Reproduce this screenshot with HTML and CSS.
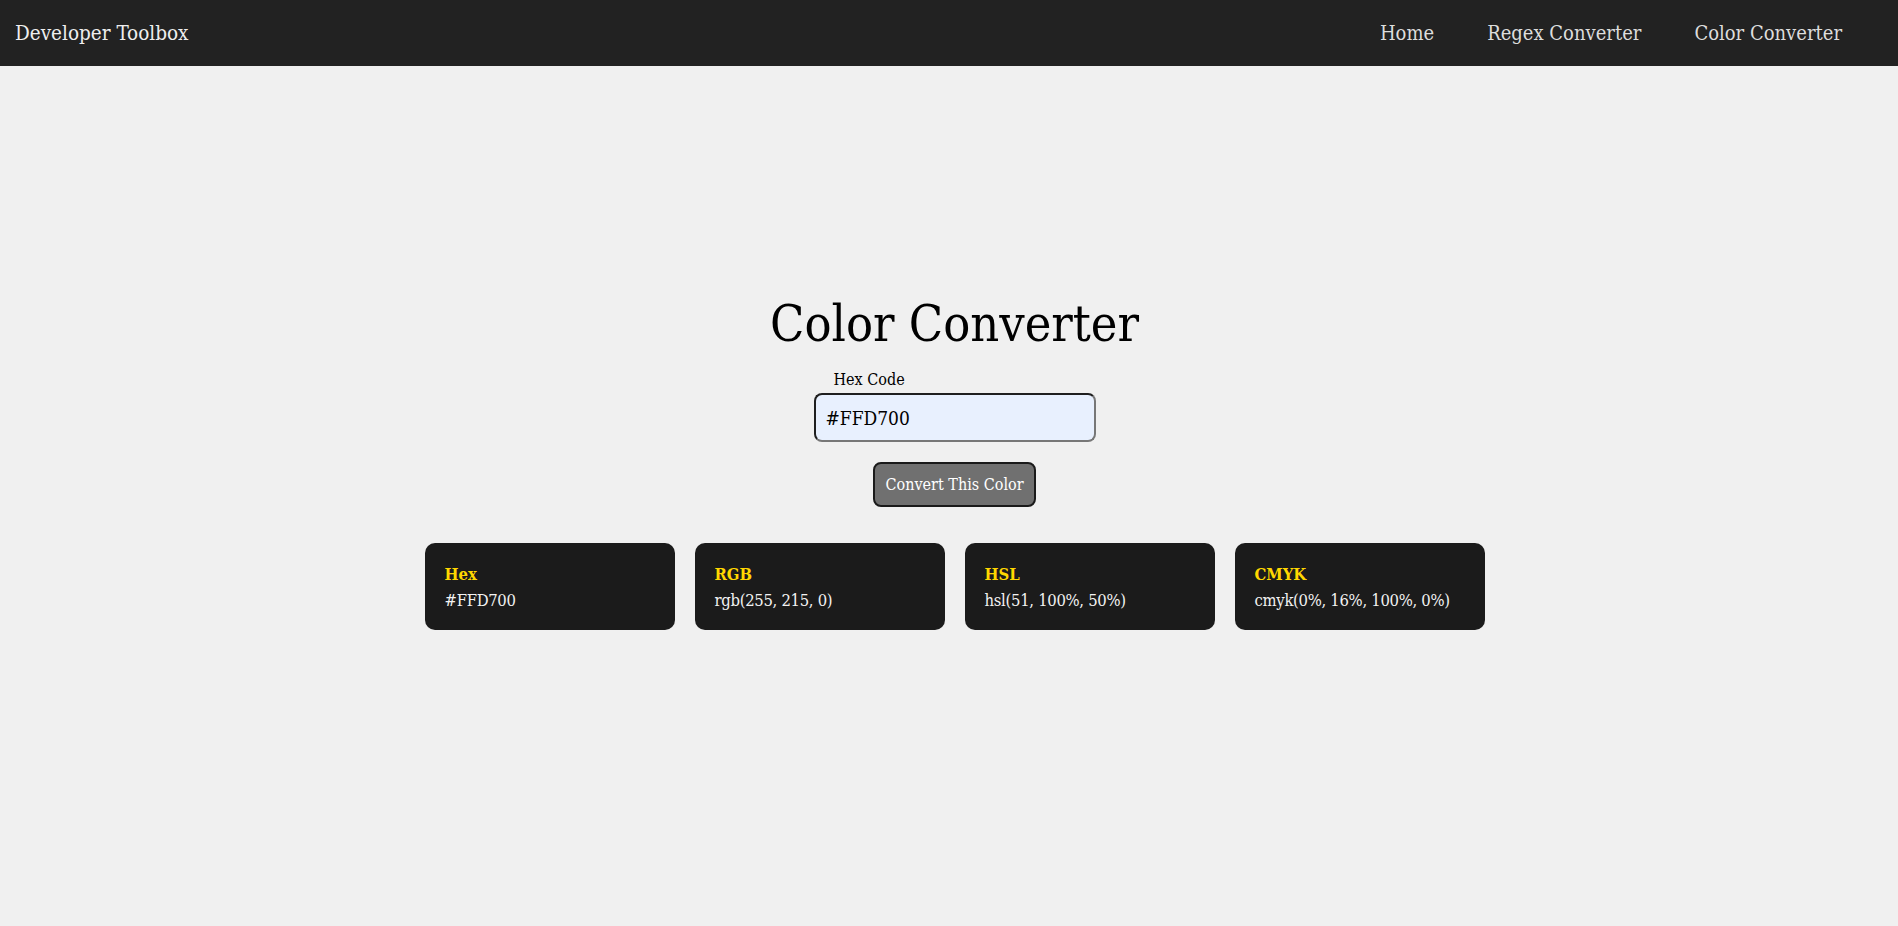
FILE: index.html
```html
<!DOCTYPE html>
<html lang="en">
<head>
<meta charset="utf-8">
<title>Color Converter - Developer Toolbox</title>
<link rel="stylesheet" href="styles.css">
</head>
<body>
<header class="navbar">
  <div class="brand">Developer Toolbox</div>
  <nav class="nav-links">
    <a href="#">Home</a>
    <a href="#">Regex Converter</a>
    <a href="#">Color Converter</a>
  </nav>
</header>
<main class="converter">
  <h1 class="title">Color Converter</h1>
  <div class="form-group">
    <label class="field-label" for="hex">Hex Code</label>
    <input class="hex-input" id="hex" type="text" value="#FFD700">
  </div>
  <button class="convert-btn" type="button">Convert This Color</button>
  <section class="results">
    <div class="card"><h3 class="card-title">Hex</h3><p class="card-value">#FFD700</p></div>
    <div class="card"><h3 class="card-title">RGB</h3><p class="card-value">rgb(255, 215, 0)</p></div>
    <div class="card"><h3 class="card-title">HSL</h3><p class="card-value">hsl(51, 100%, 50%)</p></div>
    <div class="card"><h3 class="card-title">CMYK</h3><p class="card-value">cmyk(0%, 16%, 100%, 0%)</p></div>
  </section>
</main>
</body>
</html>
```
FILE: styles.css
```css
* { box-sizing: border-box; }

body {
  margin: 0;
  background: #f0f0f0;
  font-family: "Roboto Slab", "DejaVu Serif", serif;
  font-stretch: condensed;
  color: #000;
}

.navbar {
  height: 66px;
  background: #222222;
  display: flex;
  align-items: center;
  justify-content: space-between;
  padding: 0 56px 0 15px;
}

.brand {
  color: #eeeeee;
  font-size: 20.5px;
}

.nav-links {
  display: flex;
  gap: 53px;
}

.nav-links a {
  color: #dddddd;
  font-size: 20px;
  text-decoration: none;
}

.converter {
  display: flex;
  flex-direction: column;
  align-items: center;
  padding: 228px 0 0 11px;
}

.title {
  margin: 0;
  font-size: 50px;
  font-weight: 400;
  line-height: 60px;
}

.form-group {
  width: 282px;
  margin-top: 15px;
}

.field-label {
  display: block;
  margin-left: 20px;
  font-size: 16px;
  line-height: 22px;
}

.hex-input {
  display: block;
  width: 282px;
  height: 49px;
  margin-top: 2px;
  padding: 0 10px;
  font-family: inherit;
  font-stretch: inherit;
  font-size: 19px;
  color: #000;
  background: #e8f0fe;
  border: 2px solid;
  border-color: #1f1f1f #777777 #777777 #1f1f1f;
  border-radius: 8px;
  outline: none;
}

.convert-btn {
  margin-top: 20px;
  height: 45px;
  padding: 0 10px;
  white-space: nowrap;
  font-family: inherit;
  font-stretch: inherit;
  font-size: 16px;
  color: #ffffff;
  background: #707070;
  border: 2px solid #1a1a1a;
  border-radius: 8px;
}

.results {
  display: grid;
  grid-template-columns: repeat(4, 250px);
  gap: 20px;
  margin-top: 36px;
}

.card {
  height: 87px;
  background: #1b1b1b;
  border-radius: 10px;
  padding: 20px 20px 0;
}

.card-title {
  margin: 0;
  color: #ffd700;
  font-size: 16.5px;
  font-weight: 700;
  line-height: 24px;
}

.card-value {
  margin: 2px 0 0;
  color: #f2f2f2;
  font-size: 16.5px;
  letter-spacing: -0.3px;
  line-height: 24px;
  white-space: nowrap;
}
```
